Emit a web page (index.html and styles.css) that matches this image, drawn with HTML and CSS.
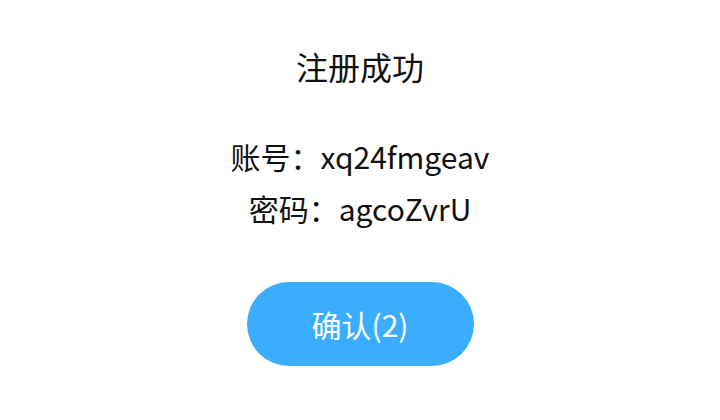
FILE: index.html
```html
<!DOCTYPE html>
<html lang="zh-CN">
<head>
    <meta charset="UTF-8">
    <meta name="viewport" content="width=device-width, initial-scale=1.0">
    <title>注册成功</title>
    <link rel="stylesheet" href="styles.css">
</head>
<body>
    <div class="dialog">
        <h1 class="title">注册成功</h1>
        <div class="info">
            <p>账号：xq24fmgeav</p>
            <p>密码：agcoZvrU</p>
        </div>
        <button class="confirm">确认(2)</button>
    </div>
</body>
</html>
```

FILE: styles.css
```css
body {
    margin: 0;
    background: #fff;
    font-family: "Noto Sans CJK SC", "Noto Sans", sans-serif;
    color: #111;
}
.dialog {
    width: 720px;
    height: 420px;
    display: flex;
    flex-direction: column;
    align-items: center;
    padding-top: 44px;
    box-sizing: border-box;
}
.title {
    margin: 0;
    font-size: 32px;
    font-weight: 400;
    line-height: 44px;
}
.info {
    margin-top: 42px;
    text-align: center;
}
.info p {
    margin: 0;
    font-size: 30px;
    line-height: 52px;
}
.confirm {
    margin-top: 48px;
    width: 227px;
    height: 84px;
    border: none;
    border-radius: 42px;
    background: #3aadfe;
    color: #fff;
    font-family: inherit;
    font-size: 30px;
}
```
